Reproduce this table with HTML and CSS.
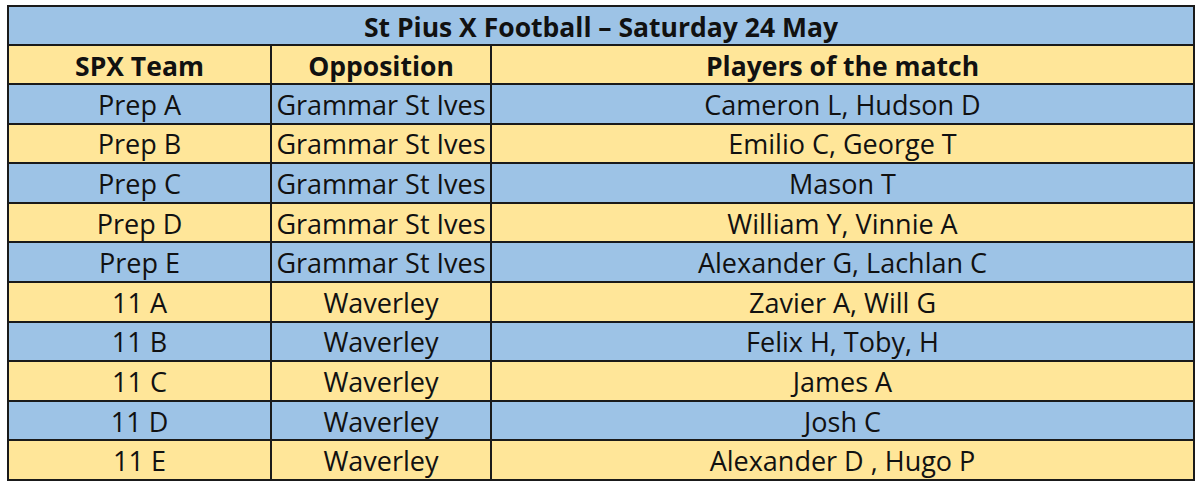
FILE: index.html
```html
<!DOCTYPE html>
<html>
<head>
<meta charset="utf-8">
<link rel="stylesheet" href="styles.css">
</head>
<body>
<table class="results">
  <colgroup>
    <col class="c-team">
    <col class="c-opp">
    <col class="c-players">
  </colgroup>
  <tr class="title"><th colspan="3">St Pius X Football – Saturday 24 May</th></tr>
  <tr class="head yellow"><th>SPX Team</th><th>Opposition</th><th>Players of the match</th></tr>
  <tr class="blue"><td>Prep A</td><td>Grammar St Ives</td><td>Cameron L, Hudson D</td></tr>
  <tr class="yellow"><td>Prep B</td><td>Grammar St Ives</td><td>Emilio C, George T</td></tr>
  <tr class="blue"><td>Prep C</td><td>Grammar St Ives</td><td>Mason T</td></tr>
  <tr class="yellow"><td>Prep D</td><td>Grammar St Ives</td><td>William Y, Vinnie A</td></tr>
  <tr class="blue"><td>Prep E</td><td>Grammar St Ives</td><td>Alexander G, Lachlan C</td></tr>
  <tr class="yellow"><td>11 A</td><td>Waverley</td><td>Zavier A, Will G</td></tr>
  <tr class="blue"><td>11 B</td><td>Waverley</td><td>Felix H, Toby, H</td></tr>
  <tr class="yellow"><td>11 C</td><td>Waverley</td><td>James A</td></tr>
  <tr class="blue"><td>11 D</td><td>Waverley</td><td>Josh C</td></tr>
  <tr class="yellow"><td>11 E</td><td>Waverley</td><td>Alexander D , Hugo P</td></tr>
</table>
</body>
</html>
```
FILE: styles.css
```css
html, body {
  margin: 0;
  background: #ffffff;
}
body {
  padding: 5px 0 0 7px;
  font-family: "Open Sans", "Liberation Sans", sans-serif;
  color: #111;
}
.results {
  border-collapse: collapse;
  width: 1188px;
  table-layout: fixed;
}
.c-team { width: 263px; }
.c-opp { width: 220px; }
.results th, .results td {
  border: 2px solid #1a1a1a;
  text-align: center;
  vertical-align: middle;
  padding: 2px 0 0;
  height: 35.6px;
  font-size: 27px;
  line-height: 30px;
  white-space: nowrap;
  overflow: hidden;
}
.results th {
  font-weight: 700;
  font-size: 26.5px;
  height: 35px;
}
.title th {
  background: #9dc3e6;
}
.blue td { background: #9dc3e6; }
.yellow td, .yellow th { background: #ffe699; }
```
